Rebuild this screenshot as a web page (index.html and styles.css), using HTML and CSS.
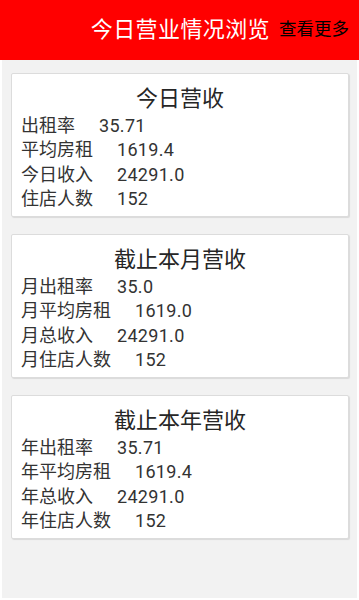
FILE: index.html
```html
<!DOCTYPE html>
<html lang="zh-CN">
<head>
<meta charset="utf-8">
<title>今日营业情况浏览</title>
<link rel="stylesheet" href="styles.css">
</head>
<body>
<header class="topbar">
  <h1 class="topbar-title">今日营业情况浏览</h1>
  <a class="topbar-more">查看更多</a>
</header>
<main class="content">
  <section class="card">
    <h2 class="card-title">今日营收</h2>
    <div class="row"><span class="label">出租率</span><span class="value">35.71</span></div>
    <div class="row"><span class="label">平均房租</span><span class="value">1619.4</span></div>
    <div class="row"><span class="label">今日收入</span><span class="value">24291.0</span></div>
    <div class="row"><span class="label">住店人数</span><span class="value">152</span></div>
  </section>
  <section class="card">
    <h2 class="card-title">截止本月营收</h2>
    <div class="row"><span class="label">月出租率</span><span class="value">35.0</span></div>
    <div class="row"><span class="label">月平均房租</span><span class="value">1619.0</span></div>
    <div class="row"><span class="label">月总收入</span><span class="value">24291.0</span></div>
    <div class="row"><span class="label">月住店人数</span><span class="value">152</span></div>
  </section>
  <section class="card">
    <h2 class="card-title">截止本年营收</h2>
    <div class="row"><span class="label">年出租率</span><span class="value">35.71</span></div>
    <div class="row"><span class="label">年平均房租</span><span class="value">1619.4</span></div>
    <div class="row"><span class="label">年总收入</span><span class="value">24291.0</span></div>
    <div class="row"><span class="label">年住店人数</span><span class="value">152</span></div>
  </section>
</main>
</body>
</html>
```
FILE: styles.css
```css
* { box-sizing: border-box; }
html, body {
  margin: 0;
  padding: 0;
  height: 100%;
  background: #ffffff;
  font-family: Roboto, "Noto Sans CJK SC", sans-serif;
}
body {
  display: flex;
  flex-direction: column;
  width: 359px;
  height: 600px;
  overflow: hidden;
}
.topbar {
  height: 60px;
  flex: 0 0 60px;
  background: #ff0000;
  display: flex;
  align-items: center;
  justify-content: flex-end;
  padding: 0 10px 0 0;
  gap: 9px;
}
.topbar-title {
  margin: 0;
  font-size: 22px;
  letter-spacing: 0.4px;
  font-weight: normal;
  color: #ffffff;
  line-height: 1;
}
.topbar-more {
  font-size: 17.5px;
  color: #000000;
  line-height: 1;
}
.content {
  flex: 1;
  margin: 0 2px 2px 2px;
  background: #f2f2f2;
  padding: 13px 8px 0 9px;
  display: flex;
  flex-direction: column;
  gap: 17px;
}
.card {
  background: #ffffff;
  border: 1px solid #dcdcdc;
  border-radius: 2px;
  box-shadow: 1px 1px 1px rgba(0,0,0,0.10);
  padding: 10px 9px 7px 9px;
  height: 144px;
}
.card-title {
  margin: 0;
  text-align: center;
  font-size: 22px;
  font-weight: normal;
  line-height: 30px;
  color: #262626;
}
.row {
  font-size: 18px;
  line-height: 24.3px;
  color: #333333;
  display: flex;
  white-space: nowrap;
}
.value {
  margin-left: 24px;
  letter-spacing: 0.3px;
}
```
